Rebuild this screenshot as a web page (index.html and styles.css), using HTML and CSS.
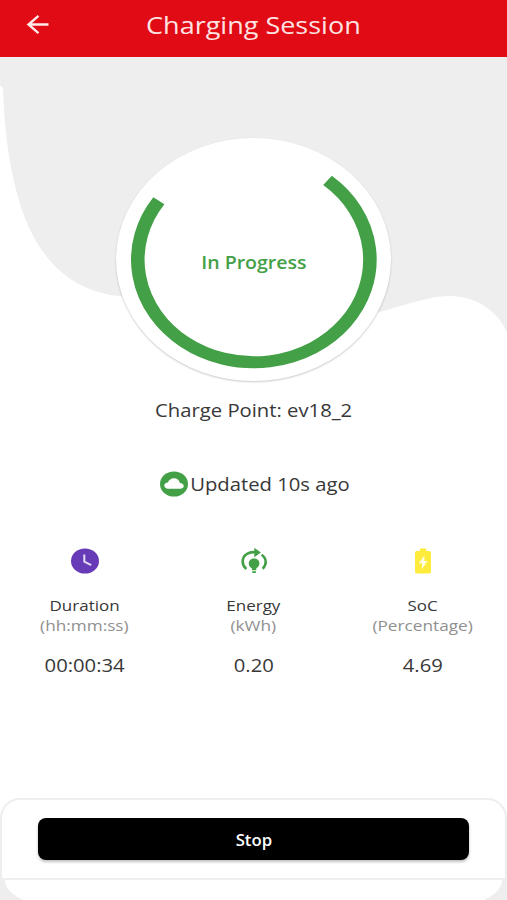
FILE: index.html
```html
<!DOCTYPE html>
<html lang="en">
<head>
<meta charset="utf-8">
<title>Charging Session</title>
<link rel="stylesheet" href="styles.css">
</head>
<body>
<div class="screen">
  <header class="bar">
    <svg class="back" viewBox="0 0 24 22" width="24" height="22"><path d="M22.5 10.5H3M12.5 1.8L2.5 10.5L12.5 19.2" fill="none" stroke="#ffe9e9" stroke-width="2.4"/></svg>
    <h1 class="title"><span class="wide">Charging Session</span></h1>
  </header>
  <main class="content">
    <svg class="wave" viewBox="0 57 507 290" width="507" height="290"><path d="M0 57V85L3 88C4 130 10 175 22 210C41 265 75 291 118 296C190 302 250 322 310 323C375 321 415 296 450 296C475 296 497 310 507 332V57Z" fill="#eee"/></svg>
    <section class="dial">
      <svg class="ring" viewBox="-122 -122 244 244" preserveAspectRatio="none"><path d="M-84.1 -59.3A102.6 102.6 0 1 0 65 -79.6" fill="none" stroke="#43a047" stroke-width="12"/></svg>
      <span class="status wide">In Progress</span>
    </section>
    <p class="point"><span class="wide">Charge Point: ev18_2</span></p>
    <p class="updated">
      <svg width="28" height="26" viewBox="0 0 28 26"><ellipse cx="14" cy="13" rx="14" ry="12.6" fill="#43a047"/><path d="M8.2 17.8C5.8 17.8 4.3 16.5 4.3 14.6S5.9 11.7 7.8 11.5C8.9 8.8 11.1 7.2 13.8 7.2C17 7.2 19.3 9.2 19.9 11.9C22.2 12 23.7 13.2 23.7 15S22.2 17.8 20.1 17.8Z" fill="#fff"/></svg>
      <span class="wide">Updated 10s ago</span>
    </p>
    <section class="stats">
      <div class="stat">
        <svg class="icon" width="28" height="26" viewBox="0 0 28 26"><ellipse cx="14" cy="13" rx="14" ry="12.6" fill="#673ab7"/><path d="M13.3 6.5V13.7L20.2 17.2" fill="none" stroke="#e4dcf3" stroke-width="2"/></svg>
        <span class="label wide">Duration</span><span class="unit wide">(hh:mm:ss)</span><span class="value wide">00:00:34</span>
      </div>
      <div class="stat">
        <svg class="icon" width="28" height="26" viewBox="0 0 28 26"><path d="M6.3 21C.8 16 1.6 8 8.3 5.2C10.5 4.2 13 4 16 4.2M21.6 6.7C27 10.4 26.8 17 22.6 20.7" fill="none" stroke="#43a047" stroke-width="2.6"/><path d="M14.3 -.2L20.9 4.5L14.3 9.2ZM8.8 15.4C8.8 12.2 11.2 10.4 14.1 10.4S19.4 12.2 19.4 15.4C19.4 17.8 17.8 19.3 16.3 20.2V22.2H11.9V20.2C10.4 19.3 8.8 17.8 8.8 15.4ZM12.3 23.2H15.9V25H12.3Z" fill="#43a047"/></svg>
        <span class="label wide">Energy</span><span class="unit wide">(kWh)</span><span class="value wide">0.20</span>
      </div>
      <div class="stat">
        <svg class="icon" width="28" height="26" viewBox="0 0 28 26"><path d="M11 .5H17.2V3H20.3Q22 3 22 4.7V23.8Q22 25.5 20.3 25.5H7.7Q6 25.5 6 23.8V4.7Q6 3 7.7 3H11Z" fill="#ffeb3b"/><path d="M15.4 7.5V13H18.5L12.9 21.2V15.2H9.6Z" fill="#fffde0"/></svg>
        <span class="label wide">SoC</span><span class="unit wide">(Percentage)</span><span class="value wide">4.69</span>
      </div>
    </section>
  </main>
  <footer class="footer">
    <div class="panel"><button class="stop"><span class="wide">Stop</span></button></div>
    <div class="base"></div>
  </footer>
</div>
</body>
</html>
```
FILE: styles.css
```css
* { box-sizing: border-box; }
body { margin: 0; background: #fff; font-family: "Open Sans", "Noto Sans", sans-serif; color: #383838; }
h1, p { margin: 0; font-weight: 400; }
.screen { width: 507px; height: 900px; display: flex; flex-direction: column; overflow: hidden; }
.wide { display: inline-block; transform: scaleX(1.125); }
.bar { height: 57px; flex: none; display: grid; grid-template-columns: 68px 1fr 68px; background: #e00b14; }
.back { margin: 14px 0 0 26px; }
.title { text-align: center; font-size: 24px; line-height: 50px; color: #ffe3e3; white-space: nowrap; }
.content { flex: 1; position: relative; display: flex; flex-direction: column; align-items: center; }
.wave { position: absolute; left: 0; top: 0; z-index: -1; }
.dial { width: 275px; height: 243px; margin-top: 81px; border-radius: 50%; background: #fff; box-shadow: 0 1px 2px rgba(0,0,0,.22); display: grid; place-items: center; flex: none; }
.ring, .status { grid-area: 1 / 1; }
.ring { width: 276px; height: 244px; }
.status { color: #43a047; font-size: 18.5px; font-weight: 600; line-height: 26px; padding-top: 4px; transform: scaleX(1.055); }
.point { font-size: 18px; line-height: 26px; margin-top: 16px; }
.updated { display: flex; align-items: center; gap: 11px; font-size: 18px; line-height: 26px; margin: 48px 6px 0 0; }
.stats { width: 507px; display: grid; grid-template-columns: repeat(3, 1fr); margin-top: 51px; }
.stat { display: flex; flex-direction: column; align-items: center; }
.label { font-size: 15.3px; line-height: 20px; margin-top: 21px; transform: scaleX(1.11); }
.unit { font-size: 15.3px; line-height: 20px; color: #909090; }
.value { font-size: 18px; line-height: 26px; margin-top: 17px; }
.footer { height: 102px; flex: none; overflow: hidden; background: linear-gradient(#fff 0 30px, #eee 30px); }
.panel { height: 82px; border: 2px solid #eee; border-radius: 20px 20px 0 0; background: #fff; padding: 18px 36px 0; }
.stop { display: block; width: 431px; height: 42px; padding: 0; border: 0; border-radius: 8px; background: #000; color: #fff; font: 600 15.5px/44px "Open Sans", sans-serif; box-shadow: 0 2px 3px rgba(0,0,0,.25); }
.stop .wide { transform: scaleX(1.08); }
.base { height: 27px; margin: 0 5px; background: #fff; border-radius: 0 0 55px 55px / 0 0 27px 27px; }
```
